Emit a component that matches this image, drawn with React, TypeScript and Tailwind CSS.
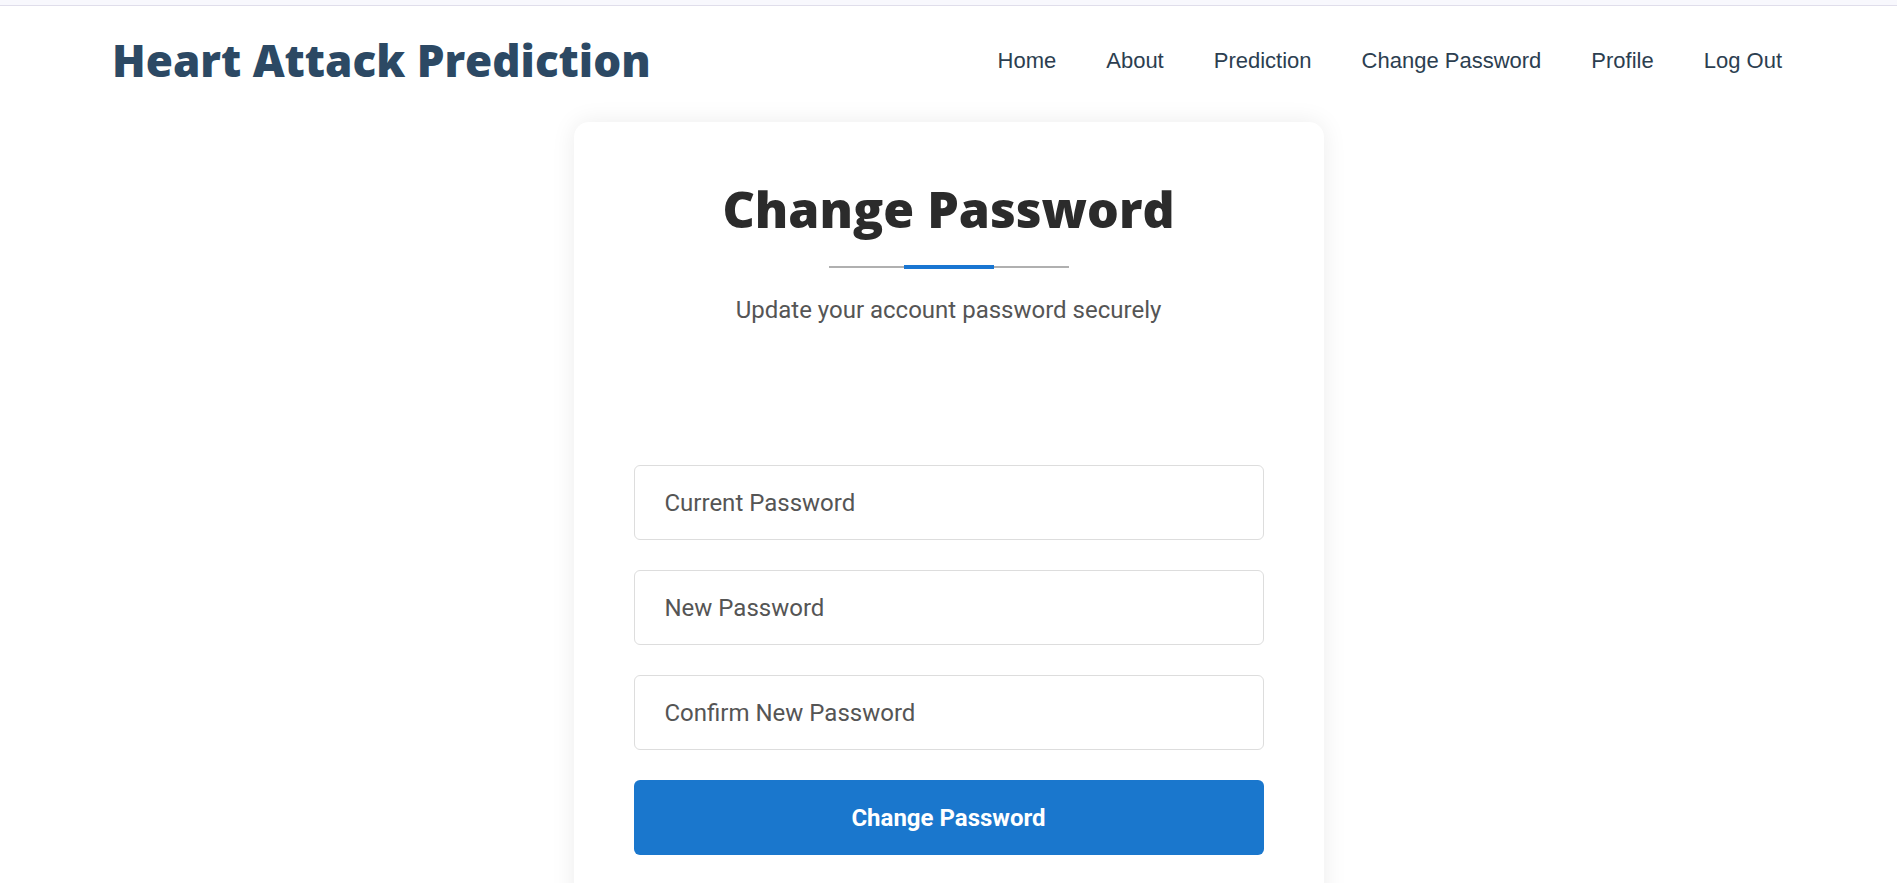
import React from "react";

export default function App() {
  return (
    <div className="min-h-screen bg-white">
      <div className="h-[6px] bg-[#f8f8fd] border-b border-[#e0deeb]" />
      <header className="h-[108px] flex items-center justify-between pl-[112px] pr-[115px]">
        <h1 className="text-[44px] font-extrabold text-[#2c4964] font-['Open_Sans',sans-serif]">
          Heart Attack Prediction
        </h1>
        <nav className="flex items-center gap-[50px] font-['Liberation_Sans',Arial,sans-serif] text-[22px] text-[#2c3e50]">
          <a>Home</a>
          <a>About</a>
          <a>Prediction</a>
          <a>Change Password</a>
          <a>Profile</a>
          <a>Log Out</a>
        </nav>
      </header>
      <main className="flex justify-center pt-[8px]">
        <div className="w-[750px] bg-white rounded-[15px] shadow-[0_0_25px_rgba(0,0,0,0.08)] px-[60px] pt-[57px] pb-[60px]">
          <h2 className="text-center text-[50px] font-extrabold text-[#2b2b2b] font-['Open_Sans',sans-serif] leading-[1.2]">
            Change Password
          </h2>
          <div className="flex justify-center items-center mt-[26px]">
            <div className="w-[75px] h-[2px] bg-[#b0b0b0]" />
            <div className="w-[90px] h-[4px] bg-[#1976d2]" />
            <div className="w-[75px] h-[2px] bg-[#b0b0b0]" />
          </div>
          <p className="text-center mt-[23px] text-[24px] leading-[36px] text-[#555] font-['Roboto',sans-serif]">
            Update your account password securely
          </p>
          <div className="h-[137px]" />
          <form className="flex flex-col gap-[30px] font-['Roboto',sans-serif]">
            <input
              type="password"
              placeholder="Current Password"
              className="h-[75px] w-full border border-[#ddd] rounded-[6px] px-[30px] text-[24px] text-[#333] placeholder:text-[#555] outline-none"
            />
            <input
              type="password"
              placeholder="New Password"
              className="h-[75px] w-full border border-[#ddd] rounded-[6px] px-[30px] text-[24px] text-[#333] placeholder:text-[#555] outline-none"
            />
            <input
              type="password"
              placeholder="Confirm New Password"
              className="h-[75px] w-full border border-[#ddd] rounded-[6px] px-[30px] text-[24px] text-[#333] placeholder:text-[#555] outline-none"
            />
            <button
              type="button"
              className="h-[75px] w-full rounded-[6px] bg-[#1a77cd] text-white text-[24px] font-bold"
            >
              Change Password
            </button>
          </form>
        </div>
      </main>
    </div>
  );
}
